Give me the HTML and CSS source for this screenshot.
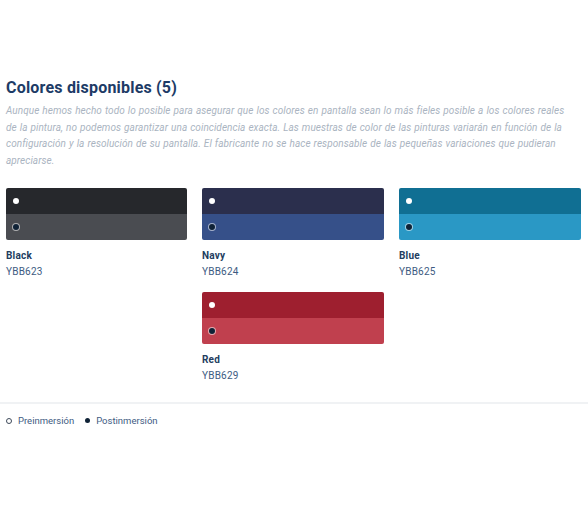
FILE: index.html
```html
<!DOCTYPE html>
<html lang="es">
<head>
<meta charset="utf-8">
<link rel="stylesheet" href="styles.css">
</head>
<body>
<section class="colors">
  <h2 class="title">Colores disponibles (5)</h2>
  <p class="note">Aunque hemos hecho todo lo posible para asegurar que los colores en pantalla sean lo más fieles posible a los colores reales<br> de la pintura, no podemos garantizar una coincidencia exacta. Las muestras de color de las pinturas variarán en función de la configuración y la resolución de su pantalla. El fabricante no se hace responsable de las pequeñas variaciones que pudieran apreciarse.</p>
  <div class="grid">
    <div class="item">
      <div class="swatch">
        <div class="half" style="background:#26282c"><span class="dot pre"></span></div>
        <div class="half" style="background:#4a4c51"><span class="dot post"></span></div>
      </div>
      <div class="name">Black</div>
      <div class="code">YBB623</div>
    </div>
    <div class="item">
      <div class="swatch">
        <div class="half" style="background:#2b2f4d"><span class="dot pre"></span></div>
        <div class="half" style="background:#365089"><span class="dot post"></span></div>
      </div>
      <div class="name">Navy</div>
      <div class="code">YBB624</div>
    </div>
    <div class="item">
      <div class="swatch">
        <div class="half" style="background:#106f93"><span class="dot pre"></span></div>
        <div class="half" style="background:#2a98c5"><span class="dot post"></span></div>
      </div>
      <div class="name">Blue</div>
      <div class="code">YBB625</div>
    </div>
    <div class="item"></div>
    <div class="item">
      <div class="swatch">
        <div class="half" style="background:#9e1f2f"><span class="dot pre"></span></div>
        <div class="half" style="background:#c0404e"><span class="dot post"></span></div>
      </div>
      <div class="name">Red</div>
      <div class="code">YBB629</div>
    </div>
  </div>
</section>
<footer class="legend">
  <span class="legend-item"><span class="mark ring"></span>Preinmersión</span>
  <span class="legend-item"><span class="mark fill"></span>Postinmersión</span>
</footer>
</body>
</html>
```
FILE: styles.css
```css
* { box-sizing: border-box; }
html, body { margin: 0; padding: 0; background: #fff; }
body {
  font-family: Roboto, "Liberation Sans", sans-serif;
  width: 588px;
  height: 506px;
  overflow: hidden;
}
.colors {
  padding: 78px 6px 0 6px;
}
.title {
  margin: 0;
  font-size: 16px;
  line-height: 20px;
  font-weight: 700;
  color: #1d3b66;
  letter-spacing: 0.2px;
}
.note {
  margin: 5px 0 0;
  font-size: 10px;
  line-height: 16.7px;
  font-style: italic;
  color: #aab4c1;
  letter-spacing: 0.06px;
  word-spacing: 0.5px;
}
.grid {
  margin-top: 18px;
  display: grid;
  grid-template-columns: 181px 182px 182px;
  column-gap: 15px;
  row-gap: 13px;
}
.swatch {
  height: 52px;
  display: flex;
  flex-direction: column;
  border-radius: 2px;
  overflow: hidden;
}
.half {
  flex: 1;
  display: flex;
  align-items: center;
  padding-left: 7px;
}
.dot {
  width: 6px;
  height: 6px;
  border-radius: 50%;
}
.dot.pre { background: #fff; }
.dot.post {
  background: #0f2236;
  box-shadow: 0 0 0 1px rgba(255,255,255,0.55);
}
.name {
  margin-top: 9px;
  font-size: 10px;
  line-height: 14px;
  font-weight: 700;
  color: #233d5f;
  letter-spacing: 0.2px;
}
.code {
  margin-top: 2px;
  font-size: 10px;
  line-height: 14px;
  color: #3e5b82;
  letter-spacing: 0.2px;
}
.legend {
  margin-top: 19px;
  border-top: 2px solid #f0f2f4;
  padding: 10px 6px;
  display: flex;
  gap: 11px;
  font-size: 9.5px;
  line-height: 14px;
  color: #3e5b82;
}
.legend-item {
  display: flex;
  align-items: center;
  gap: 6px;
}
.mark {
  width: 6px;
  height: 6px;
  border-radius: 50%;
}
.mark.ring { border: 1px solid #3e4a5a; }
.mark.fill { background: #0f2236; width: 5px; height: 5px; }
```
